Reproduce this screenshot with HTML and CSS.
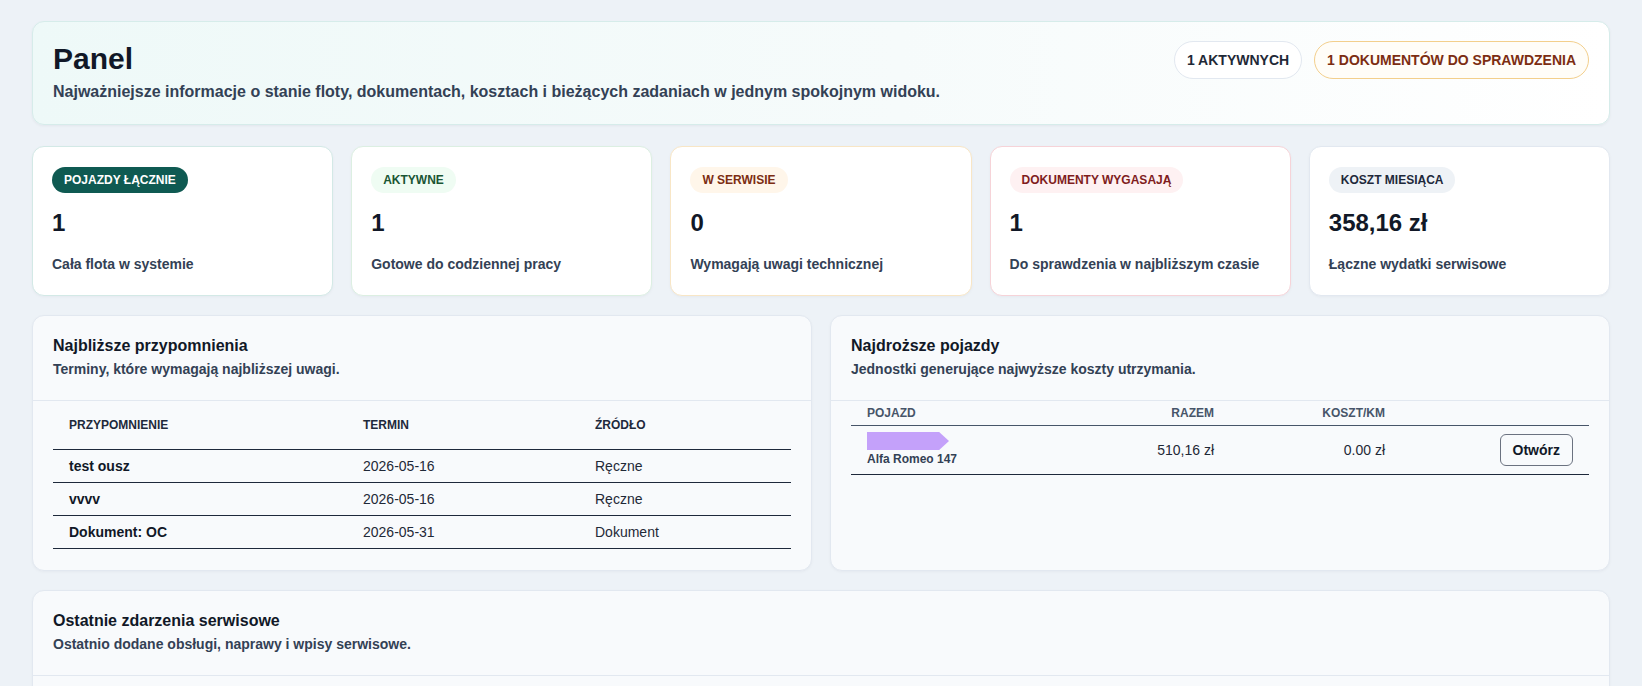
FILE: index.html
```html
<!DOCTYPE html>
<html lang="pl">
<head>
    <meta charset="UTF-8">
    <meta name="viewport" content="width=device-width, initial-scale=1.0">
    <title>Panel floty</title>
    <link rel="stylesheet" href="styles.css">
</head>
<body>
    <main class="page">
        <!-- Nagłówek -->
        <header class="hero">
            <div class="hero-text">
                <h1>Panel</h1>
                <p>Najważniejsze informacje o stanie floty, dokumentach, kosztach i bieżących zadaniach w jednym spokojnym widoku.</p>
            </div>
            <div class="hero-chips">
                <span class="chip">1 AKTYWNYCH</span>
                <span class="chip chip-warn">1 DOKUMENTÓW DO SPRAWDZENIA</span>
            </div>
        </header>

        <!-- Kafelki z liczbami -->
        <section class="stats">
            <div class="stat stat-total">
                <span class="tag">POJAZDY ŁĄCZNIE</span>
                <div class="stat-value">1</div>
                <div class="stat-desc">Cała flota w systemie</div>
            </div>
            <div class="stat stat-active">
                <span class="tag">AKTYWNE</span>
                <div class="stat-value">1</div>
                <div class="stat-desc">Gotowe do codziennej pracy</div>
            </div>
            <div class="stat stat-service">
                <span class="tag">W SERWISIE</span>
                <div class="stat-value">0</div>
                <div class="stat-desc">Wymagają uwagi technicznej</div>
            </div>
            <div class="stat stat-docs">
                <span class="tag">DOKUMENTY WYGASAJĄ</span>
                <div class="stat-value">1</div>
                <div class="stat-desc">Do sprawdzenia w najbliższym czasie</div>
            </div>
            <div class="stat stat-cost">
                <span class="tag">KOSZT MIESIĄCA</span>
                <div class="stat-value">358,16 zł</div>
                <div class="stat-desc">Łączne wydatki serwisowe</div>
            </div>
        </section>

        <!-- Przypomnienia i koszty -->
        <section class="panels">
            <div class="panel">
                <div class="panel-head">
                    <h2>Najbliższe przypomnienia</h2>
                    <p>Terminy, które wymagają najbliższej uwagi.</p>
                </div>
                <div class="panel-body">
                    <table class="table">
                        <colgroup>
                            <col style="width: 294px">
                            <col style="width: 232px">
                            <col>
                        </colgroup>
                        <thead>
                            <tr><th>PRZYPOMNIENIE</th><th>TERMIN</th><th>ŹRÓDŁO</th></tr>
                        </thead>
                        <tbody>
                            <tr><td class="strong">test ousz</td><td>2026-05-16</td><td>Ręczne</td></tr>
                            <tr><td class="strong">vvvv</td><td>2026-05-16</td><td>Ręczne</td></tr>
                            <tr><td class="strong">Dokument: OC</td><td>2026-05-31</td><td>Dokument</td></tr>
                        </tbody>
                    </table>
                </div>
            </div>

            <div class="panel">
                <div class="panel-head">
                    <h2>Najdroższe pojazdy</h2>
                    <p>Jednostki generujące najwyższe koszty utrzymania.</p>
                </div>
                <div class="panel-body">
                    <table class="table table-compact">
                        <colgroup>
                            <col style="width: 240px">
                            <col style="width: 139px">
                            <col style="width: 171px">
                            <col>
                        </colgroup>
                        <thead>
                            <tr><th>POJAZD</th><th class="num">RAZEM</th><th class="num">KOSZT/KM</th><th></th></tr>
                        </thead>
                        <tbody>
                            <tr>
                                <td>
                                    <div class="car-flag"></div>
                                    <div class="car-name">Alfa Romeo 147</div>
                                </td>
                                <td class="num">510,16 zł</td>
                                <td class="num">0.00 zł</td>
                                <td class="num"><button class="btn-open">Otwórz</button></td>
                            </tr>
                        </tbody>
                    </table>
                </div>
            </div>
        </section>

        <!-- Zdarzenia serwisowe -->
        <section class="panel">
            <div class="panel-head">
                <h2>Ostatnie zdarzenia serwisowe</h2>
                <p>Ostatnio dodane obsługi, naprawy i wpisy serwisowe.</p>
            </div>
            <div class="panel-body panel-body-tall"></div>
        </section>
    </main>
</body>
</html>
```

FILE: styles.css
```css
/* Ogólne */
html, body {
    margin: 0;
    padding: 0;
    background-color: #edf2f7;
    font-family: "Liberation Sans", Arial, sans-serif;
    color: #111827;
}

.page {
    display: flex;
    flex-direction: column;
    gap: 19px;
    padding: 21px 32px 40px;
}

/* Nagłówek */
.hero {
    display: flex;
    justify-content: space-between;
    align-items: flex-start;
    margin-bottom: 2px;
    padding: 20px;
    border: 1px solid #d6ecea;
    border-radius: 12px;
    background: linear-gradient(90deg, #eef9f8 0%, #f6fbfb 55%, #ffffff 100%);
    box-shadow: 0 1px 3px rgba(15, 23, 42, 0.05);
}
.hero h1 {
    margin: 0;
    font-size: 30px;
    font-weight: 700;
    color: #111827;
}
.hero p {
    margin: 4px 0 0;
    font-size: 16px;
    line-height: 1.5;
    font-weight: 700;
    color: #334155;
}
.hero-chips {
    display: flex;
    gap: 12px;
    margin-top: -1px;
}
.chip {
    padding: 10px 12px;
    line-height: 16px;
    font-size: 14px;
    font-weight: 700;
    color: #1f2937;
    background-color: #ffffff;
    border: 1px solid #e2e8f0;
    border-radius: 999px;
    white-space: nowrap;
}
.chip-warn {
    color: #7c2d12;
    border-color: #f3cf8c;
    background-color: #fffdf8;
}

/* Kafelki */
.stats {
    display: grid;
    grid-template-columns: repeat(5, 1fr);
    gap: 18px;
}
.stat {
    background-color: #ffffff;
    border: 1px solid #e2e8f0;
    border-radius: 12px;
    padding: 20px 19px 21px;
    box-shadow: 0 1px 3px rgba(15, 23, 42, 0.04);
}
.tag {
    display: inline-block;
    padding: 0 12px;
    line-height: 26px;
    font-size: 12px;
    font-weight: 700;
    border-radius: 999px;
}
.stat-value {
    margin: 15px 0 17px;
    font-size: 24px;
    line-height: 29px;
    font-weight: 700;
    color: #111827;
}
.stat-desc {
    font-size: 14px;
    line-height: 20px;
    font-weight: 700;
    color: #334155;
}

.stat-total { border-color: #d3e9e6; }
.stat-total .tag { background-color: #0f5a52; color: #ffffff; }
.stat-active { border-color: #dcefe2; }
.stat-active .tag { background-color: #effcf3; color: #1a5534; }
.stat-service { border-color: #f8e6c6; }
.stat-service .tag { background-color: #fff6ea; color: #7c2d12; }
.stat-docs { border-color: #f6d3d8; }
.stat-docs .tag { background-color: #fef1f2; color: #7f1d1d; }
.stat-cost { border-color: #e2e8f0; }
.stat-cost .tag { background-color: #eef2f6; color: #1e293b; }

/* Panele */
.panels {
    display: grid;
    grid-template-columns: 1fr 1fr;
    gap: 18px;
}
.panel {
    background-color: #f8fafc;
    border: 1px solid #e2e8f0;
    border-radius: 12px;
    box-shadow: 0 1px 3px rgba(15, 23, 42, 0.04);
}
.panel-head {
    padding: 21px 20px 20px;
    border-bottom: 1px solid #e2e8f0;
}
.panel-head h2 {
    margin: 0;
    font-size: 16px;
    font-weight: 700;
    color: #111827;
}
.panel-head p {
    margin: 4px 0 0;
    font-size: 14px;
    line-height: 21px;
    font-weight: 700;
    color: #334155;
}
.panel-body {
    padding: 0 20px 21px;
}
.panel-body-tall {
    min-height: 160px;
}

/* Tabele */
.table {
    width: 100%;
    border-collapse: collapse;
    table-layout: fixed;
    font-size: 14px;
}
.table th {
    padding: 16px 16px;
    line-height: 16px;
    font-size: 12px;
    font-weight: 700;
    text-align: left;
    color: #1e293b;
    border-bottom: 1px solid #1e293b;
}
.table td {
    padding: 8px 16px;
    line-height: 16px;
    color: #1f2937;
    border-bottom: 1px solid #1e293b;
}
.table td.strong {
    font-weight: 700;
    color: #111827;
}
.table .num {
    text-align: right;
}

.table-compact th {
    padding: 4px 16px;
    color: #475569;
    border-bottom-color: #475569;
}
.table-compact td {
    padding: 6px 16px;
    vertical-align: middle;
}
.car-flag {
    width: 82px;
    height: 18px;
    background-color: #c4a1fa;
    clip-path: polygon(0 0, 88% 0, 100% 50%, 88% 100%, 0 100%);
}
.car-name {
    font-size: 12px;
    line-height: 18px;
    font-weight: 700;
    color: #334155;
}
.btn-open {
    padding: 0 12px;
    height: 32px;
    font-family: inherit;
    font-size: 14px;
    font-weight: 700;
    color: #111827;
    background-color: #f8fafc;
    border: 1px solid #6b7280;
    border-radius: 6px;
    cursor: pointer;
}
```
